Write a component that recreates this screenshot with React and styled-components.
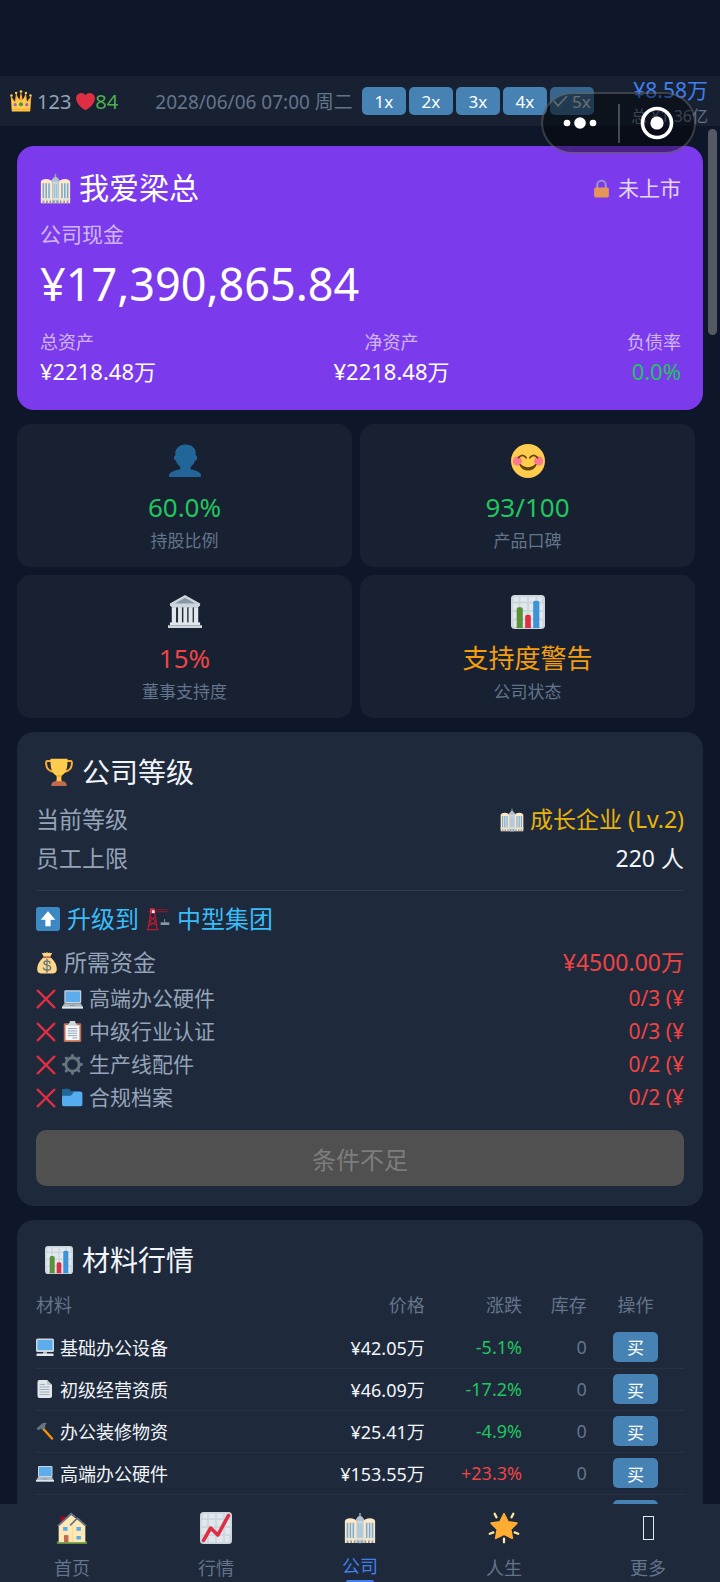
import React from 'react';
import styled, { createGlobalStyle } from 'styled-components';

const GlobalStyle = createGlobalStyle`
    * {
        box-sizing: border-box;
    }

    body {
        margin: 0;
        background: #0e1729;
        color: #f1f5f9;
        font-family: "Noto Sans", "Noto Sans CJK SC", sans-serif;
    }

    button {
        font-family: inherit;
        border: none;
        padding: 0;
    }
`

/* ---------- icons ---------- */

const chartPaper = (
    <>
        <rect width="36" height="36" rx="4" fill="#ccd6dd" />
        <path fill="#e1e8ed" d="M3 2h5v5H3zM10 2h7v5h-7zM19 2h7v5h-7zM28 2h5v5h-5zM2 9h6v7H2zM10 9h7v7h-7zM19 9h7v7h-7zM28 9h6v7h-6zM2 18h6v7H2zM10 18h7v7h-7zM19 18h7v7h-7zM28 18h6v7h-6zM3 27h5v7H3zM10 27h7v7h-7zM19 27h7v7h-7zM28 27h5v7h-5z" />
    </>
)

const icons = {
    crown: (
        <>
            <path fill="#ffac33" d="M3 33 1 9l7 10 2-14 5 12 3-15 3 15 5-12 2 14 7-10-2 24z" />
            <path fill="#ffcc4d" d="M3 35V16l6 5 3-9 6 7 6-7 3 9 6-5v19z" />
            <g fill="#ffcc4d">
                <circle cx="2.5" cy="9" r="2" />
                <circle cx="10" cy="5" r="2" />
                <circle cx="18" cy="2.5" r="2.2" />
                <circle cx="26" cy="5" r="2" />
                <circle cx="33.5" cy="9" r="2" />
            </g>
            <circle cx="18" cy="23.5" r="3.4" fill="#5c913b" />
            <circle cx="8.5" cy="24" r="2.6" fill="#9266cc" />
            <circle cx="27.5" cy="24" r="2.6" fill="#9266cc" />
            <path fill="#ffac33" d="M3 31h30v2H3z" />
        </>
    ),
    heart: (
        <path fill="#dd2e44" d="M35.885 11.833c0-5.45-4.418-9.868-9.867-9.868-3.308 0-6.227 1.633-8.018 4.129-1.791-2.496-4.71-4.129-8.017-4.129-5.45 0-9.868 4.417-9.868 9.868 0 .772.098 1.52.266 2.241C1.751 22.587 11.216 31.568 18 34.034c6.783-2.466 16.249-11.447 17.617-19.959.17-.721.268-1.469.268-2.242z" />
    ),
    building: (
        <>
            <path fill="#99aab5" d="M17.2 1h1.6v6h-1.6z" />
            <path fill="#b4c0c8" d="M13 9q2-4 5-5 3 1 5 5v26H13z" />
            <path fill="#ffe8c8" d="M1 10q1-3 6-3t7 3v25H1zM22 10q2-3 7-3t6 3v25H22z" />
            <path fill="#ccd6dd" d="M15 10h6v25h-6z" />
            <path fill="#74acd5" d="M3 12h1.8v18H3zM6.3 12h1.8v18H6.300zM9.600 12h1.800v18H9.600zM24.600 12h1.800v18h-1.800zM27.900 12h1.800v18h-1.800zM31.200 12H33v18h-1.800z" />
            <path fill="#9cc3dd" d="M16 13h1.500v17H16zM18.500 13H20v17h-1.500z" />
            <path fill="#e4e0d2" d="M1 29h34v2H1z" />
            <path fill="#8c99a1" d="M3 32h2v3H3zM7 32h2v3H7zM11 32h2v3h-2zM15 32h2v3h-2zM19 32h2v3h-2zM23 32h2v3h-2zM27 32h2v3h-2zM31 32h2v3h-2z" />
        </>
    ),
    lock: (
        <>
            <path fill="none" stroke="#aab8c2" strokeWidth="3.5" d="M10 18v-7a8 8 0 0 1 16 0v7" />
            <rect x="4" y="16" width="28" height="19" rx="3.5" fill="#ffac33" />
        </>
    ),
    person: (
        <path fill="#269" d="M24 26.799v-2.566c2-1.348 4.08-3.779 4.703-6.896.186.103.206.17.413.17.991 0 1.709-1.287 1.709-2.873 0-1.562-.823-2.827-1.794-2.865.187-.674.293-1.577.293-2.735C29.324 5.168 26 .527 18.541.527c-6.629 0-10.777 4.641-10.777 8.507 0 1.123.069 2.043.188 2.755-.911.137-1.629 1.352-1.629 2.845 0 1.587.804 2.873 1.796 2.873.206 0 .025-.067.209-.17C8.952 20.453 11 22.885 13 24.232v2.414c-5 .645-12 3.437-12 6.23v1.061C1 35 2.076 35 3.137 35h29.725C33.924 35 35 35 35 33.938v-1.061c0-2.615-6-5.225-11-6.078z" />
    ),
    smile: (
        <>
            <circle cx="18" cy="18" r="18" fill="#ffcc4d" />
            <circle cx="6.8" cy="18" r="4.8" fill="#ff7892" />
            <circle cx="29.2" cy="18" r="4.8" fill="#ff7892" />
            <path fill="none" stroke="#664500" strokeWidth="1.9" strokeLinecap="round" d="M8 14.500q4-4.800 8 0M20 14.500q4-4.800 8 0" />
            <path fill="#664500" d="M10.5 21.5c-.7-.7-1.8 0-1.4.9C10.6 26 14 28 18 28s7.4-2 8.9-5.6c.4-.9-.7-1.6-1.4-.9C23.5 23.5 21 24.5 18 24.5s-5.5-1-7.5-3z" />
        </>
    ),
    bank: (
        <>
            <path fill="#aab8c2" d="M5 12h26v19H5z" />
            <path fill="#292f33" d="M8 13h3v17H8zM14 13h3v17h-3zM20 13h3v17h-3zM26 13h3v17h-3z" />
            <path fill="#e1e8ed" d="M4 13h4.500v17H4zM10.700 13h4v17h-4zM16.300 13h4v17h-4zM21.800 13h4v17h-4zM27.500 13H32v17h-4.500z" />
            <path fill="#ccd6dd" d="M18 0 34 9v2l-2 2H4l-2-2V9z" />
            <path fill="#8899a6" d="M18 3 29 9H7z" />
            <path fill="#e1e8ed" d="M2 29h32v3H2z" />
            <path fill="#ccd6dd" d="M0 32h36v3H0z" />
        </>
    ),
    barChart: (
        <>
            {chartPaper}
            <path fill="#5c913b" d="M6 15q0-2 2-2h2.500q2 0 2 2v20H6z" />
            <path fill="#dd2e44" d="M15 23q0-2 2-2h2q2 0 2 2v12h-6z" />
            <path fill="#3b94d9" d="M23.500 8q0-2 2-2H28q2 0 2 2v27h-6.500z" />
        </>
    ),
    lineChart: (
        <>
            {chartPaper}
            <path fill="none" stroke="#dd2e44" strokeWidth="4" strokeLinecap="round" strokeLinejoin="round" d="m4 32 8-14 8 8L32 4" />
        </>
    ),
    trophy: (
        <>
            <path fill="none" stroke="#ffac33" strokeWidth="2.6" d="M9 4H3q-2 0-1.500 4C2 14 5 17 12 18M27 4h6q2 0 1.500 4C34 14 31 17 24 18" />
            <path fill="#ffcc4d" d="M7 1h22c0 11-1 18-8 22v7h-6v-7C8 19 7 12 7 1z" />
            <path fill="#ffac33" d="M15 22h6v2h-6zM14 29h8v2h-8z" />
            <path fill="#c1694f" d="M8 36q0-6 6-6h8q6 0 6 6z" />
        </>
    ),
    arrowUp: (
        <>
            <rect width="36" height="36" rx="4" fill="#3b88c3" />
            <path fill="#fff" d="M18 6.500 29 19h-7v10h-8V19H7z" />
        </>
    ),
    crane: (
        <>
            <path fill="none" stroke="#be1931" strokeWidth="1.8" d="M7 8 3 34M13 8l4 26M6 14l9 8-11 6M14 14l-9 8 12 6M1 34h18" />
            <path stroke="#8f1a2e" strokeWidth="1.6" d="M2 7h32M12 4h20" />
            <path fill="#dd2e44" d="M6 2h7v8H6z" />
            <path stroke="#99aab5" strokeWidth="1.2" d="M28 18v6" />
            <path fill="#8899a6" d="M22 23h13v4H22z" />
            <path fill="#f5f8fa" d="M9 5h4v4H9z" />
        </>
    ),
    money: (
        <>
            <path fill="#fdd888" d="M12 9h12c6 5 10 12 10 19 0 5-2 7-6 7H8c-4 0-6-2-6-7C2 21 6 14 12 9z" />
            <path fill="#fdd888" d="M9 1q3 2 4.500 0Q16 3 18 0q2 3 4.500 1Q24 3 27 1l-4 7H13z" />
            <path fill="#bf6952" d="M12 7h12v3H12z" />
            <path fill="none" stroke="#67757f" strokeWidth="2.2" strokeLinecap="round" d="M23 18c-1-5-10-4-10 0 0 5 11 2 11 8 0 5-11 5-12 0M18 12v21" />
        </>
    ),
    cross: (
        <path fill="none" stroke="#dd2e44" strokeWidth="4.2" strokeLinecap="round" d="m3 3 30 30M33 3 3 33" />
    ),
    laptop: (
        <>
            <rect x="4" y="4" width="29" height="22" rx="2" fill="#ccd6dd" />
            <path fill="#5dadec" d="M6 6h25v18H6z" />
            <path fill="#aab8c2" d="m4 26-4 7v2h36v-2l-4-7z" />
            <path fill="#e1e8ed" d="M0 32h36v3H0z" />
            <path fill="#8899a6" d="M13 31h10l-1-2h-8z" />
        </>
    ),
    clipboard: (
        <>
            <rect x="3" y="4" width="30" height="32" rx="2" fill="#c1694f" />
            <path fill="#f5f8fa" d="M6 7h24v26H6z" />
            <path fill="#ccd6dd" d="M13 3a5 5 0 0 1 10 0l4 5H9z" />
            <path stroke="#8899a6" strokeWidth="1.5" d="M10 13h16M10 17h16M10 21h16M10 25h16M18 29h8" />
        </>
    ),
    gear: (
        <>
            <circle cx="18" cy="18" r="11.5" fill="none" stroke="#66757f" strokeWidth="5" />
            <path stroke="#66757f" strokeWidth="5" strokeLinecap="round" d="M18 2.500v4M18 29.500v4M2.500 18h4M29.500 18h4M7 7l3 3M26 26l3 3M7 29l3-3M26 10l3-3" />
        </>
    ),
    folder: (
        <>
            <path fill="#226699" d="M0 6q0-3 3-3h8q3 0 4 4h15q3 0 3 3v20H0z" />
            <path fill="#55acee" d="M1 15h13q3 0 5-5 1-2 4-2h9q3 0 3 3v19q0 3-3 3H3q-3 0-3-3V17z" />
        </>
    ),
    desktop: (
        <>
            <path fill="#aab8c2" d="M14 27h8v6h-8z" />
            <rect y="1" width="36" height="27" rx="3" fill="#ccd6dd" />
            <path fill="#5dadec" d="M3 4h30v20H3z" />
            <rect x="1" y="31" width="34" height="5" rx="1" fill="#e1e8ed" />
        </>
    ),
    page: (
        <>
            <path fill="#e1e8ed" d="M7 0h15l10 10v22q0 4-4 4H7q-4 0-4-4V4q0-4 4-4z" />
            <path fill="#b8c5cd" d="M22 0 32 10h-7q-3 0-3-3z" />
            <path stroke="#99aab5" strokeWidth="1.8" d="M7 9h11M7 14h20M7 19h20M7 24h20M7 29h20" />
        </>
    ),
    hammer: (
        <>
            <path stroke="#f4900c" strokeWidth="5" strokeLinecap="round" d="m14 13 18 20" />
            <path fill="#66757f" d="M1 13 12 3q5-3 10 0l-4 3 1 4-6 6-4-3-4 4z" />
        </>
    ),
    house: (
        <>
            <path fill="#5c913b" d="M1 33h34v3H1z" />
            <path fill="#a0041e" d="M5 5h6v9H5z" />
            <path fill="#ffe8b6" d="M3 15 17 3l16 12v19H3z" />
            <path fill="none" stroke="#66757f" strokeWidth="2" d="M2 16 17 2l5 4M34 16 24 7l-8 8" />
            <path fill="#ffd983" d="M18 16h1v18h-1z" />
            <path fill="#55acee" d="M8 17h5v4H8zM23 17h5v4h-5zM23 27h5v4h-5z" />
            <path fill="#c1694f" d="M9 26h5v8H9z" />
        </>
    ),
    star: (
        <>
            <path fill="#ffac33" stroke="#ffac33" strokeWidth="2" strokeLinejoin="round" d="m18 2 4.500 9 10 1.500-7 7 1.800 10L18 25l-9.300 4.500 1.800-10-7-7 10-1.500z" />
            <path stroke="#ffe8a0" strokeWidth="2.6" strokeLinecap="round" d="m7.500 2 2 4M28.500 2l-2 4M2 24.500l4-1.500M34 24.500 30 23M18 30v4" />
        </>
    ),
}

const IconSvg = styled.svg`
    width: ${({ $size }) => $size}px;
    height: ${({ $size }) => $size}px;
    flex: none;
    display: block;
`

function Icon({ name, size }) {
    return <IconSvg $size={size} viewBox="0 0 36 36" aria-hidden="true">{icons[name]}</IconSvg>
}

/* ---------- frame ---------- */

const Page = styled.div`
    position: relative;
    display: flex;
    flex-direction: column;
    height: 100vh;
    padding-top: 76px;
    overflow: hidden;
`

const TopBar = styled.header`
    flex: none;
    display: flex;
    align-items: center;
    justify-content: space-between;
    height: 50px;
    padding: 0 12px 0 10px;
    background: #172132;
    white-space: nowrap;
`

const PlayerStats = styled.div`
    display: flex;
    align-items: center;
    font-size: 20px;
    color: #94a3b8;
    gap: 5px;
`

const Health = styled.span`
    display: flex;
    align-items: center;
    color: #4caf50;
`

const Clock = styled.div`
    display: flex;
    align-items: center;
    gap: 9px;
    font-size: 19px;
    color: #64748b;
`

const SpeedList = styled.div`
    display: flex;
    gap: 3px;
`

const SpeedButton = styled.button`
    display: flex;
    align-items: center;
    justify-content: center;
    gap: 4px;
    width: 44px;
    height: 28px;
    border-radius: 5px;
    background: #4682b4;
    color: #fff;
    font-size: 17px;
    opacity: ${({ disabled }) => disabled ? 0.7 : 1};
`

const CheckMark = styled.svg`
    width: 15px;
    height: 12px;
    fill: none;
    stroke: currentColor;
    stroke-width: 1.5;
`

const Wealth = styled.div`
    padding-top: 4px;
    text-align: right;
    line-height: 26px;
    font-size: 16px;
    color: #64748b;
`

const WealthCash = styled.div`
    font-size: 21px;
    color: #4080ee;
`

// mini-program capsule floating over the header
const Capsule = styled.div`
    position: absolute;
    top: 92px;
    right: 24px;
    display: flex;
    align-items: center;
    width: 155px;
    height: 62px;
    border: 2px solid rgba(255, 255, 255, 0.2);
    border-radius: 31px;
    background: rgba(0, 0, 0, 0.42);
`

const CapsuleButton = styled.button`
    flex: 1;
    display: flex;
    align-items: center;
    justify-content: center;
    height: 39px;
    background: none;

    & + & {
        border-left: 2px solid rgba(255, 255, 255, 0.25);
    }
`

const ScrollThumb = styled.div`
    position: absolute;
    top: 129px;
    right: 3px;
    width: 9px;
    height: 13%;
    border-radius: 5px;
    background: #545963;
`

const Content = styled.main`
    flex: 1;
    min-height: 0;
    overflow: hidden;
    padding: 20px 17px 0;
`

/* ---------- company card ---------- */

const Hero = styled.section`
    padding: 22px 22px 24px 23px;
    border-radius: 17px;
    background: #7c3aed;
    color: #fff;
`

const HeroTop = styled.div`
    display: flex;
    align-items: center;
    justify-content: space-between;
    line-height: 40px;
`

const HeroName = styled.h1`
    display: flex;
    align-items: center;
    gap: 8px;
    margin: 0;
    font-size: 30px;
    font-weight: 400;
`

const Listing = styled.span`
    display: flex;
    align-items: center;
    gap: 7px;
    font-size: 21px;
    opacity: 0.8;
`

const CashLabel = styled.div`
    margin-top: 13px;
    font-size: 21px;
    line-height: 26px;
    color: rgba(255, 255, 255, 0.65);
`

const CashAmount = styled.div`
    margin-top: 7px;
    font-size: 45px;
    line-height: 60px;
`

const AssetList = styled.div`
    display: flex;
    justify-content: space-between;
    margin-top: 16px;
`

const Asset = styled.div`
    text-align: ${({ $align }) => $align};
    font-size: 18px;
    line-height: 24px;
    color: rgba(255, 255, 255, 0.65);
`

const AssetValue = styled.div`
    margin-top: 2px;
    font-size: 22px;
    line-height: 30px;
    color: ${({ $color }) => $color || '#fff'};
`

/* ---------- stat tiles ---------- */

const StatGrid = styled.section`
    display: grid;
    grid-template-columns: 1fr 1fr;
    gap: 8px;
    margin: 14px 8px 0 0;
`

const StatCard = styled.div`
    display: flex;
    flex-direction: column;
    align-items: center;
    padding: 20px 0 16px;
    border-radius: 14px;
    background: #172132;
`

const StatValue = styled.div`
    margin-top: 11px;
    font-size: 26px;
    line-height: 36px;
    color: ${({ $color }) => $color};
`

const StatLabel = styled.div`
    margin-top: 6px;
    font-size: 17px;
    line-height: 20px;
    color: #64748b;
`

/* ---------- panels ---------- */

const Panel = styled.section`
    margin-top: 14px;
    padding: 20px 19px;
    border-radius: 17px;
    background: #1e293b;
`

const PanelTitle = styled.h2`
    display: flex;
    align-items: center;
    gap: 9px;
    margin: 0 0 8px;
    padding-left: 9px;
    font-size: 28px;
    font-weight: 400;
    line-height: 40px;
`

const Row = styled.div`
    display: flex;
    align-items: center;
    justify-content: space-between;
    font-size: 23px;
    line-height: 39px;
    color: #94a3b8;
`

const RowPart = styled.span`
    display: flex;
    align-items: center;
    gap: 6px;
    color: ${({ $color }) => $color || 'inherit'};
`

const Upgrade = styled.div`
    margin-top: 12px;
    padding-top: 11px;
    border-top: 1px solid #303b4c;
`

const UpgradeTitle = styled.h3`
    display: flex;
    align-items: center;
    gap: 7px;
    margin: 0 0 7px;
    font-size: 24px;
    font-weight: 400;
    line-height: 34px;
    color: #38bdf8;
`

const MaterialRow = styled(Row)`
    font-size: 21px;
    line-height: 33px;
`

const UpgradeButton = styled.button`
    display: block;
    width: 100%;
    height: 56px;
    margin-top: 16px;
    border-radius: 10px;
    background: #505050;
    color: #7d7d7d;
    font-size: 24px;
`

/* ---------- market table ---------- */

const MarketTable = styled.table`
    width: 100%;
    table-layout: fixed;
    border-collapse: collapse;
    font-size: 18px;
`

const HeadCell = styled.th`
    width: ${({ $width }) => $width};
    height: 38px;
    padding: 0 0 6px;
    font-weight: 400;
    text-align: ${({ $align }) => $align || 'right'};
    color: #64748b;
`

const Cell = styled.td`
    height: 42px;
    padding: 0;
    border-bottom: 1px solid #273244;
    text-align: ${({ $align }) => $align || 'right'};
    color: ${({ $color }) => $color || '#f1f5f9'};
`

const MaterialName = styled.span`
    display: flex;
    align-items: center;
    gap: 6px;
`

const BuyButton = styled.button`
    width: 45px;
    height: 30px;
    border-radius: 5px;
    background: #4682b4;
    color: #fff;
    font-size: 17px;
    vertical-align: middle;
`

/* ---------- bottom tabs ---------- */

const TabBar = styled.nav`
    flex: none;
    display: grid;
    grid-template-columns: repeat(5, 1fr);
    height: 78px;
    overflow: hidden;
    background: #1e293b;
`

const Tab = styled.a`
    display: flex;
    flex-direction: column;
    align-items: center;
    padding-top: 8px;
    font-size: 18px;
    line-height: ${({ $active }) => $active ? 20 : 24}px;
    color: ${({ $active }) => $active ? '#4080ee' : '#64748b'};
    text-decoration: none;

    &::after {
        content: "";
        width: 28px;
        height: 4px;
        margin-top: 4px;
        border-radius: 2px;
        background: ${({ $active }) => $active ? '#4080ee' : 'none'};
    }
`

const TabIcon = styled.span`
    display: flex;
    align-items: center;
    justify-content: center;
    height: 32px;
    margin-bottom: 12px;
`

const EmptyGlyph = styled.span`
    width: 11px;
    height: 24px;
    border: 1px solid #e2e8f0;
`

const GREEN = '#22c55e'
const RED = '#ef4444'

const stats = [
    { icon: 'person', value: '60.0%', label: '持股比例', color: GREEN },
    { icon: 'smile', value: '93/100', label: '产品口碑', color: GREEN },
    { icon: 'bank', value: '15%', label: '董事支持度', color: RED },
    { icon: 'barChart', value: '支持度警告', label: '公司状态', color: '#f59e0b' },
]

const requirements = [
    { icon: 'laptop', name: '高端办公硬件', count: '0/3 (¥' },
    { icon: 'clipboard', name: '中级行业认证', count: '0/3 (¥' },
    { icon: 'gear', name: '生产线配件', count: '0/2 (¥' },
    { icon: 'folder', name: '合规档案', count: '0/2 (¥' },
]

const materials = [
    { icon: 'desktop', name: '基础办公设备', price: '¥42.05万', change: '-5.1%', stock: 0 },
    { icon: 'page', name: '初级经营资质', price: '¥46.09万', change: '-17.2%', stock: 0 },
    { icon: 'hammer', name: '办公装修物资', price: '¥25.41万', change: '-4.9%', stock: 0 },
    { icon: 'laptop', name: '高端办公硬件', price: '¥153.55万', change: '+23.3%', stock: 0 },
]

const tabs = [
    { icon: 'house', label: '首页' },
    { icon: 'lineChart', label: '行情' },
    { icon: 'building', label: '公司', active: true },
    { icon: 'star', label: '人生' },
    { label: '更多' },
]

function Header() {
    return (
        <TopBar>
            <PlayerStats>
                <Icon name="crown" size={22} />
                <span>123</span>
                <Health><Icon name="heart" size={19} />84</Health>
            </PlayerStats>
            <Clock>
                <span>2028/06/06 07:00 周二</span>
                <SpeedList>
                    {['1x', '2x', '3x', '4x'].map(speed => (
                        <SpeedButton key={speed}>{speed}</SpeedButton>
                    ))}
                    <SpeedButton disabled>
                        <CheckMark viewBox="0 0 15 12"><path d="m1 6 4 5 9-10" /></CheckMark>
                        5x
                    </SpeedButton>
                </SpeedList>
            </Clock>
            <Wealth>
                <WealthCash>¥8.58万</WealthCash>
                总 ¥1.36亿
            </Wealth>
        </TopBar>
    )
}

function CompanyCard() {
    return (
        <Hero>
            <HeroTop>
                <HeroName><Icon name="building" size={31} />我爱梁总</HeroName>
                <Listing><Icon name="lock" size={19} />未上市</Listing>
            </HeroTop>
            <CashLabel>公司现金</CashLabel>
            <CashAmount>¥17,390,865.84</CashAmount>
            <AssetList>
                <Asset $align="left">总资产<AssetValue>¥2218.48万</AssetValue></Asset>
                <Asset $align="center">净资产<AssetValue>¥2218.48万</AssetValue></Asset>
                <Asset $align="right">负债率<AssetValue $color={GREEN}>0.0%</AssetValue></Asset>
            </AssetList>
        </Hero>
    )
}

function LevelPanel() {
    return (
        <Panel>
            <PanelTitle><Icon name="trophy" size={28} />公司等级</PanelTitle>
            <Row>
                <span>当前等级</span>
                <RowPart $color="#eab308"><Icon name="building" size={24} />成长企业 (Lv.2)</RowPart>
            </Row>
            <Row>
                <span>员工上限</span>
                <RowPart $color="#f1f5f9">220 人</RowPart>
            </Row>
            <Upgrade>
                <UpgradeTitle>
                    <Icon name="arrowUp" size={24} />
                    升级到
                    <Icon name="crane" size={24} />
                    中型集团
                </UpgradeTitle>
                <Row>
                    <RowPart><Icon name="money" size={22} />所需资金</RowPart>
                    <RowPart $color={RED}>¥4500.00万</RowPart>
                </Row>
                {requirements.map(item => (
                    <MaterialRow key={item.name}>
                        <RowPart>
                            <Icon name="cross" size={20} />
                            <Icon name={item.icon} size={21} />
                            {item.name}
                        </RowPart>
                        <RowPart $color={RED}>{item.count}</RowPart>
                    </MaterialRow>
                ))}
                <UpgradeButton disabled>条件不足</UpgradeButton>
            </Upgrade>
        </Panel>
    )
}

function MarketPanel() {
    return (
        <Panel>
            <PanelTitle><Icon name="barChart" size={28} />材料行情</PanelTitle>
            <MarketTable>
                <thead>
                    <tr>
                        <HeadCell $width="40%" $align="left">材料</HeadCell>
                        <HeadCell $width="20%">价格</HeadCell>
                        <HeadCell $width="15%">涨跌</HeadCell>
                        <HeadCell $width="10%">库存</HeadCell>
                        <HeadCell $width="15%" $align="center">操作</HeadCell>
                    </tr>
                </thead>
                <tbody>
                    {materials.map(item => (
                        <tr key={item.name}>
                            <Cell $align="left">
                                <MaterialName><Icon name={item.icon} size={18} />{item.name}</MaterialName>
                            </Cell>
                            <Cell>{item.price}</Cell>
                            <Cell $color={item.change.startsWith('+') ? RED : GREEN}>{item.change}</Cell>
                            <Cell $color="#64748b">{item.stock}</Cell>
                            <Cell $align="center"><BuyButton>买</BuyButton></Cell>
                        </tr>
                    ))}
                    <tr>
                        <Cell colSpan={4} />
                        <Cell $align="center"><BuyButton aria-label="买" /></Cell>
                    </tr>
                </tbody>
            </MarketTable>
        </Panel>
    )
}

function App() {
    return (
        <Page>
            <GlobalStyle />
            <Header />
            <Content>
                <CompanyCard />
                <StatGrid>
                    {stats.map(item => (
                        <StatCard key={item.label}>
                            <Icon name={item.icon} size={34} />
                            <StatValue $color={item.color}>{item.value}</StatValue>
                            <StatLabel>{item.label}</StatLabel>
                        </StatCard>
                    ))}
                </StatGrid>
                <LevelPanel />
                <MarketPanel />
            </Content>
            <TabBar>
                {tabs.map(tab => (
                    <Tab key={tab.label} href="#" $active={tab.active}>
                        <TabIcon>{tab.icon ? <Icon name={tab.icon} size={32} /> : <EmptyGlyph />}</TabIcon>
                        {tab.label}
                    </Tab>
                ))}
            </TabBar>
            <ScrollThumb />
            <Capsule>
                <CapsuleButton aria-label="菜单">
                    <svg width="36" height="14" viewBox="0 0 36 14" fill="#fff">
                        <circle cx="5" cy="7" r="3.3" />
                        <circle cx="18" cy="7" r="5.8" />
                        <circle cx="31" cy="7" r="3.3" />
                    </svg>
                </CapsuleButton>
                <CapsuleButton aria-label="关闭">
                    <svg width="34" height="34" viewBox="0 0 34 34" fill="#fff">
                        <circle cx="17" cy="17" r="14.5" fill="none" stroke="#fff" strokeWidth="3.6" />
                        <circle cx="17" cy="17" r="6.6" />
                    </svg>
                </CapsuleButton>
            </Capsule>
        </Page>
    )
}

export default App;
